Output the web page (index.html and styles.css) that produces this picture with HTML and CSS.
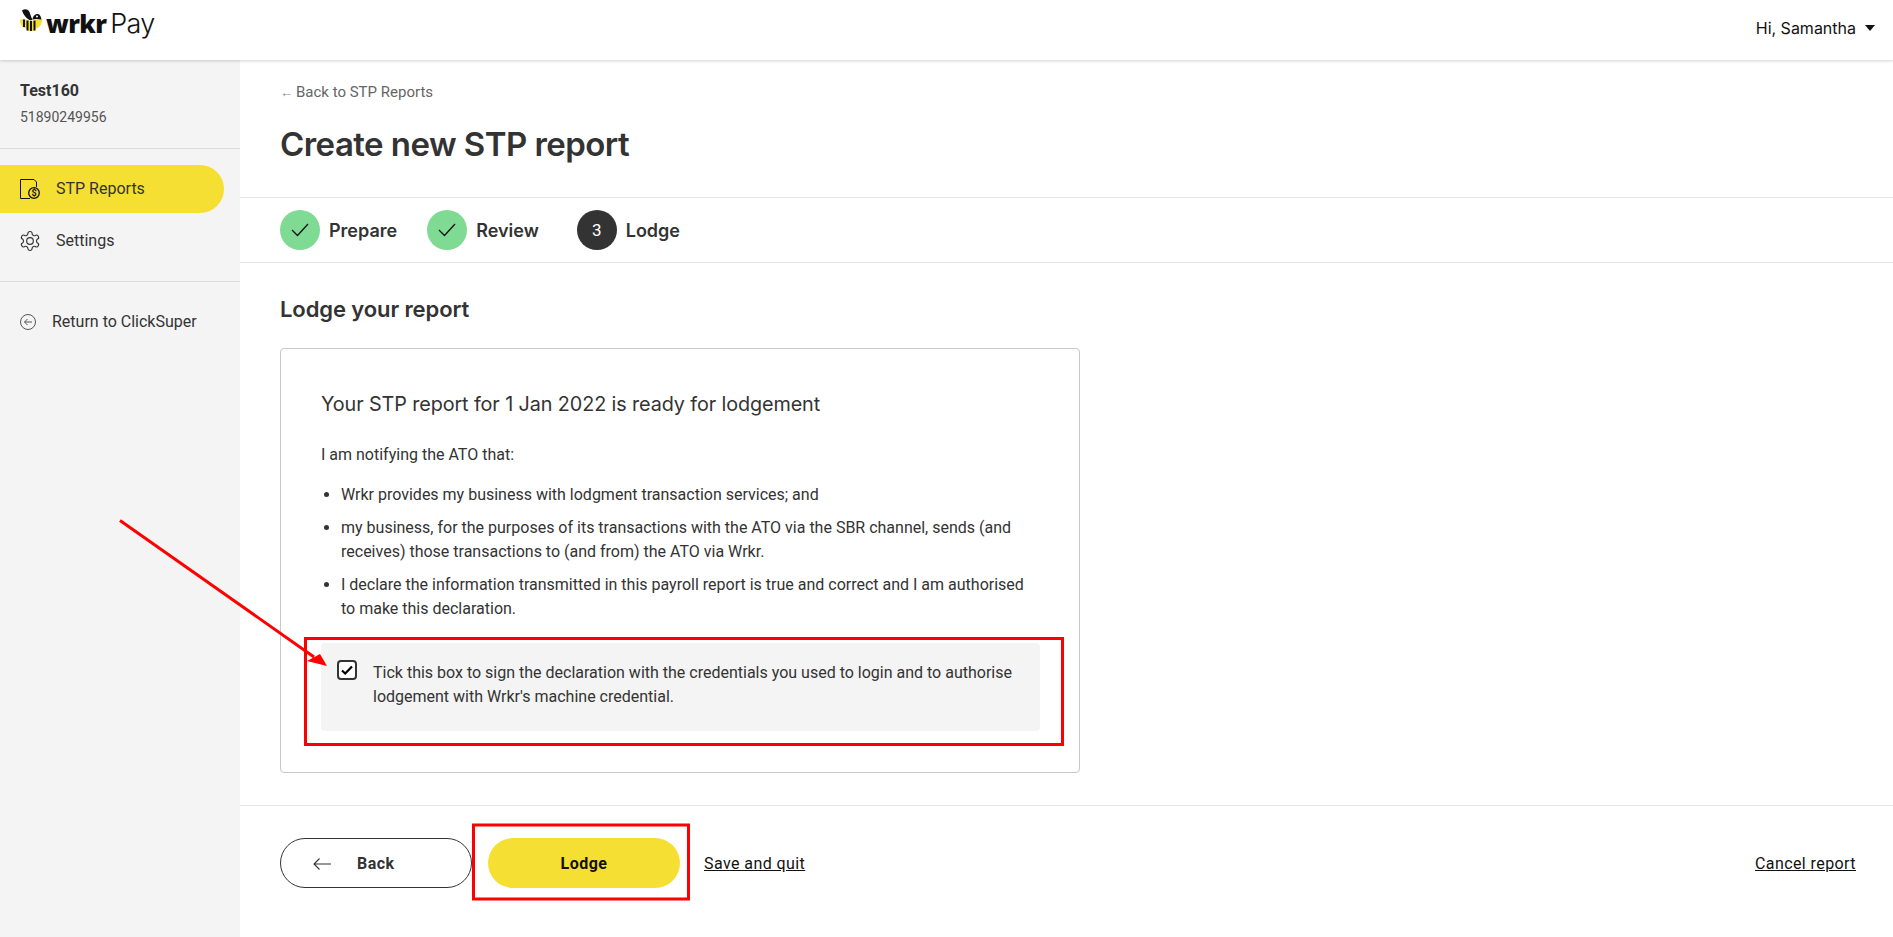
FILE: index.html
```html
<!DOCTYPE html>
<html lang="en">
<head>
<meta charset="utf-8">
<title>Create new STP report</title>
<link rel="stylesheet" href="styles.css">
</head>
<body>
<header class="topbar">
  <a class="logo">
    <svg class="bee" width="22" height="22" viewBox="0 0 22 22"><path d="M0 10.500C3.500 10 7 10.500 9 12L13 12C15 10.500 18.500 10 22 10.500C22 16 19 19 15.500 19.500L14.500 22H7.500L6.500 19.500C3 19 0 16 0 10.500Z" fill="#f6df33"/><path d="M4 10.500v7.500M7.500 11.500v10M11 12v10M14.500 11.500v10" stroke="#111" stroke-width="2" fill="none"/><path d="M2 1.500C4.500-.5 8-.5 9.500 3C10.500 5.500 11 8 12.500 10.500L11 11.500C7.500 10.500 3.500 6.500 2 1.500Z" fill="#111"/><path d="M12.500 10.500C13 6.500 15.500 5 17.500 5C19.500 5 21 7 21.500 10.500C18 9.800 15 9.800 12.500 10.500Z" fill="#111"/><circle cx="17" cy="7.500" r="1" fill="#fff"/></svg>
    <span class="logo-word">wrkr</span><span class="logo-pay">Pay</span>
  </a>
  <div class="user">Hi, Samantha<span class="caret"></span></div>
</header>
<div class="shell">
  <aside class="sidebar">
    <div class="org">
      <div class="org-name">Test160</div>
      <div class="org-abn">51890249956</div>
    </div>
    <nav class="nav">
      <a class="nav-item active">
        <svg class="nav-icon" width="20" height="20" viewBox="0 0 20 20" fill="none" stroke="#111" stroke-width="1"><path d="M10 19.500H.5V.5H14L16.500 3V8"/><circle cx="14" cy="14" r="5.300" fill="#f6df33" stroke-width="1.300"/><text x="14" y="17.200" font-size="9" font-weight="700" font-family="Roboto" fill="#111" stroke="none" text-anchor="middle">$</text></svg>
        <span class="nav-label">STP Reports</span>
      </a>
      <a class="nav-item">
        <svg class="nav-icon" width="20" height="20" viewBox="1.500 1.500 21 21" fill="none" stroke="#333" stroke-width="1.200" stroke-linejoin="round"><path d="M12.220 2h-.44a2 2 0 0 0-2 2v.18a2 2 0 0 1-1 1.730l-.43.25a2 2 0 0 1-2 0l-.15-.08a2 2 0 0 0-2.730.73l-.22.38a2 2 0 0 0 .73 2.730l.15.1a2 2 0 0 1 1 1.720v.51a2 2 0 0 1-1 1.740l-.15.09a2 2 0 0 0-.73 2.730l.22.38a2 2 0 0 0 2.730.73l.15-.08a2 2 0 0 1 2 0l.43.25a2 2 0 0 1 1 1.730V20a2 2 0 0 0 2 2h.44a2 2 0 0 0 2-2v-.18a2 2 0 0 1 1-1.730l.43-.25a2 2 0 0 1 2 0l.15.08a2 2 0 0 0 2.730-.73l.22-.39a2 2 0 0 0-.73-2.730l-.15-.08a2 2 0 0 1-1-1.740v-.5a2 2 0 0 1 1-1.740l.15-.09a2 2 0 0 0 .73-2.730l-.22-.38a2 2 0 0 0-2.730-.73l-.15.08a2 2 0 0 1-2 0l-.43-.25a2 2 0 0 1-1-1.730V4a2 2 0 0 0-2-2z"/><circle cx="12" cy="12" r="3.500"/></svg>
        <span class="nav-label">Settings</span>
      </a>
    </nav>
    <a class="return">
      <svg width="16" height="16" viewBox="0 0 16 16" fill="none" stroke="#555" stroke-width="1"><circle cx="8" cy="8" r="7.500"/><path d="M12 8H4.500M7.500 5L4.500 8l3 3"/></svg>
      Return to ClickSuper
    </a>
  </aside>
  <main class="main">
    <section class="page-head">
      <a class="back-link"><span class="back-arrow">←</span>Back to STP Reports</a>
      <h1 class="title">Create new STP report</h1>
    </section>
    <ol class="steps">
      <li class="step"><span class="dot done"><svg width="18" height="14" viewBox="0 0 18 14" fill="none" stroke="#111" stroke-width="1.300"><path d="M1 7l5.500 5.500L17 1"/></svg></span>Prepare</li>
      <li class="step"><span class="dot done"><svg width="18" height="14" viewBox="0 0 18 14" fill="none" stroke="#111" stroke-width="1.300"><path d="M1 7l5.500 5.500L17 1"/></svg></span>Review</li>
      <li class="step current"><span class="dot now">3</span>Lodge</li>
    </ol>
    <section class="content">
      <h2 class="section-title">Lodge your report</h2>
      <div class="card">
        <h3 class="card-title">Your STP report for 1 Jan 2022 is ready for lodgement</h3>
        <p class="lead">I am notifying the ATO that:</p>
        <ul class="terms">
          <li>Wrkr provides my business with lodgment transaction services; and</li>
          <li>my business, for the purposes of its transactions with the ATO via the SBR channel, sends (and receives) those transactions to (and from) the ATO via Wrkr.</li>
          <li>I declare the information transmitted in this payroll report is true and correct and I am authorised to make this declaration.</li>
        </ul>
        <div class="consent">
          <span class="check"><svg width="12" height="10" viewBox="0 0 12 10" fill="none" stroke="#000" stroke-width="2.200"><path d="M1 5.500L4.200 8.500L11 1.500"/></svg></span>
          <p>Tick this box to sign the declaration with the credentials you used to login and to authorise lodgement with Wrkr's machine credential.</p>
        </div>
      </div>
    </section>
    <footer class="actions">
      <a class="btn btn-back"><svg width="18" height="12" viewBox="0 0 18 12" fill="none" stroke="#333" stroke-width="1.100"><path d="M18 6H1M6.500 .5L1 6l5.500 5.500"/></svg><span>Back</span></a>
      <a class="btn btn-lodge">Lodge</a>
      <a class="link">Save and quit</a>
      <a class="link cancel">Cancel report</a>
    </footer>
  </main>
</div>
<svg class="annotations" width="1893" height="937" viewBox="0 0 1893 937" fill="none">
  <path d="M120 520.500L314 657" stroke="#f00" stroke-width="3"/>
  <path d="M327 666L320 654L307 661Z" fill="#f00"/>
  <rect x="305.500" y="638.500" width="757" height="106" stroke="#f00" stroke-width="3"/>
  <rect x="473.500" y="825" width="215" height="74" stroke="#f00" stroke-width="3"/>
</svg>
</body>
</html>
```
FILE: styles.css
```css
* { box-sizing: border-box; }
html, body { margin: 0; height: 100%; overflow: hidden; }
body { font-family: Roboto, "Liberation Sans", sans-serif; font-size: 16px; color: #333; background: #fff; position: relative; }
a { color: inherit; }
.topbar { height: 60px; display: flex; align-items: flex-start; justify-content: space-between; padding: 9px 18px 0 20px; background: #fff; box-shadow: 0 1px 3px rgba(0,0,0,.18); position: relative; z-index: 2; }
.logo { display: flex; align-items: flex-start; color: #111; }
.bee { flex: none; }
.logo-word { font-family: "Open Sans", sans-serif; font-weight: 800; font-size: 25px; line-height: 28px; margin-left: 4px; letter-spacing: -.6px; }
.logo-pay { font-family: Inter, sans-serif; font-weight: 300; font-size: 27px; line-height: 29px; margin-left: 4px; letter-spacing: -.7px; }
.user { display: flex; align-items: center; height: 20px; margin-top: 9px; color: #111; font-family: Inter, sans-serif; font-size: 16px; }
.caret { width: 0; height: 0; border: 5px solid transparent; border-top: 6px solid #111; border-bottom: 0; margin-left: 9px; }
.shell { display: flex; height: 877px; }
.sidebar { width: 240px; flex: none; background: #f4f4f4; }
.org { height: 89px; padding-top: 21px; padding-left: 20px; border-bottom: 1px solid #dcdcdc; }
.org-name { font-weight: 700; font-size: 16px; line-height: 20px; }
.org-abn { font-size: 14px; line-height: 20px; margin-top: 6px; color: #555; }
.nav { display: flex; flex-direction: column; padding: 16px 0 16px; border-bottom: 1px solid #dcdcdc; gap: 4px; }
.nav-item { display: flex; align-items: center; height: 48px; padding-left: 20px; gap: 16px; width: 224px; font-size: 16px; border-radius: 0 24px 24px 0; }
.nav-item.active { background: #f6df33; }
.nav-icon { flex: none; overflow: visible; }
.nav-label { position: relative; top: -1px; }
.return { display: flex; align-items: center; gap: 16px; padding: 30px 0 0 20px; font-size: 16px; line-height: 20px; }
.main { flex: 1; min-width: 0; display: flex; flex-direction: column; }
.page-head { height: 138px; padding: 22px 40px 0; border-bottom: 1px solid #e4e4e4; }
.back-link { display: block; font-size: 15px; line-height: 20px; color: #666; }
.back-arrow { color: #888; font-size: 13px; margin-right: 3px; }
.title { margin: 19px 0 0; font-family: Inter, sans-serif; font-weight: 600; font-size: 33px; line-height: 44px; color: #333; letter-spacing: -.55px; }
.steps { list-style: none; margin: 0; padding: 0 40px; height: 65px; display: flex; align-items: center; border-bottom: 1px solid #e4e4e4; }
.step { display: flex; align-items: center; gap: 9px; font-family: Inter, sans-serif; font-weight: 600; font-size: 18px; margin-right: 30px; }
.step.current { margin-left: 8px; }
.dot { width: 40px; height: 40px; border-radius: 50%; display: flex; align-items: center; justify-content: center; }
.dot.done { background: #7fda93; }
.dot.now { background: #333; color: #fff; font-weight: 400; font-size: 17px; font-family: Roboto, sans-serif; }
.content { padding: 0 40px; height: 543px; border-bottom: 1px solid #e4e4e4; }
.section-title { margin: 31px 0 0; font-family: Inter, sans-serif; font-weight: 600; font-size: 22px; line-height: 30px; color: #333; letter-spacing: -.1px; }
.card { width: 800px; height: 425px; margin-top: 24px; border: 1px solid #c8c8c8; border-radius: 4px; padding: 43px 40px 0; }
.card-title { margin: 0; font-family: Inter, sans-serif; font-weight: 400; font-size: 19.800px; line-height: 24px; color: #333; letter-spacing: -.1px; }
.lead { margin: 27px 0 0; font-size: 16px; line-height: 24px; }
.terms { margin: 16px 0 0; padding: 0 0 0 20px; font-size: 16px; line-height: 24px; }
.terms li { margin-bottom: 9px; }
.consent { display: flex; gap: 16px; width: 719px; height: 88px; margin-top: 22px; background: #f4f4f4; border-radius: 4px; padding: 17px 16px 0; }
.consent p { margin: 0; font-size: 16px; line-height: 24px; padding-top: 1px; }
.check { flex: none; width: 20px; height: 20px; border: 2px solid #333; border-radius: 4px; display: flex; align-items: center; justify-content: center; background: #fff; }
.actions { flex: 1; display: flex; align-items: flex-start; padding: 32px 37px 0 40px; }
.btn { height: 50px; width: 192px; border-radius: 25px; display: flex; align-items: center; justify-content: center; font-weight: 700; font-size: 16px; letter-spacing: .5px; padding-top: 1px; }
.btn-back { border: 1px solid #333; margin-right: 16px; padding-left: 32px; justify-content: flex-start; }
.btn-back span { margin-left: 26px; }
.btn-lodge { background: #f6df33; color: #111; margin-right: 24px; }
.link { color: #111; text-decoration: underline; font-size: 16px; line-height: 52px; letter-spacing: .42px; }
.cancel { margin-left: auto; }
.annotations { position: absolute; left: 0; top: 0; pointer-events: none; z-index: 5; }
```
